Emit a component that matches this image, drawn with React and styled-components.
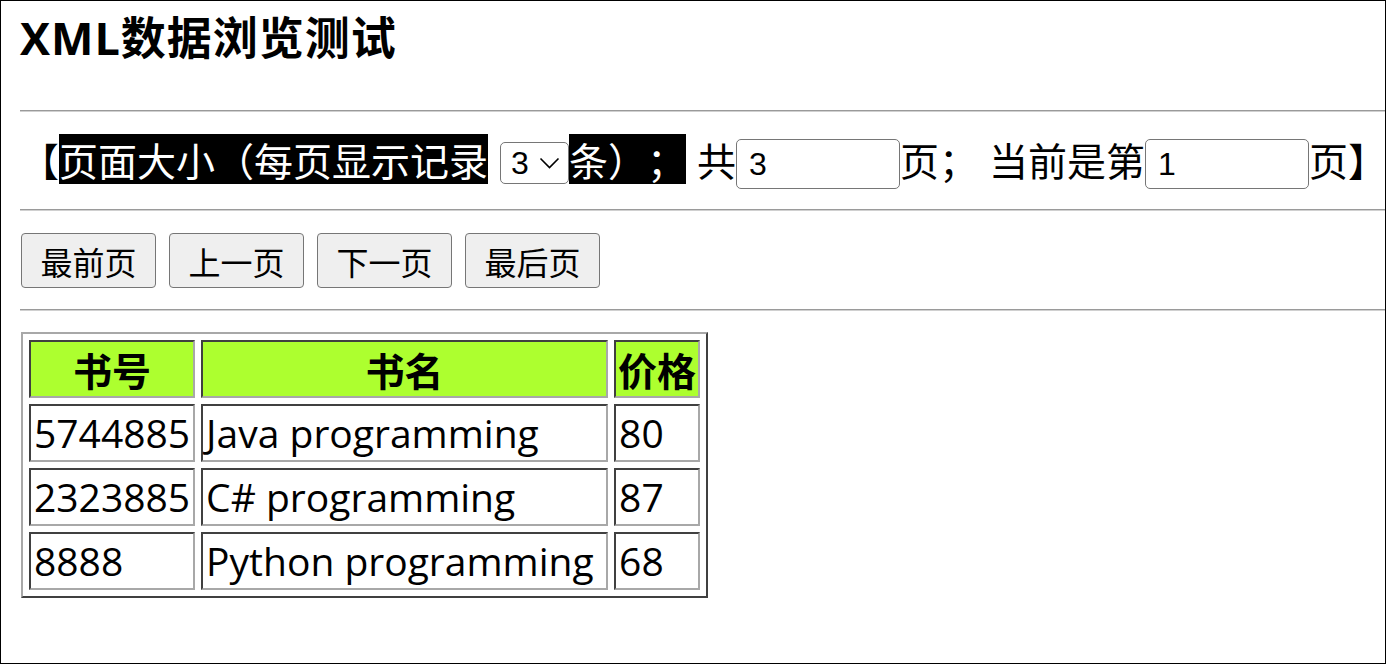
import React from "react";
import styled, { createGlobalStyle } from "styled-components";

const GlobalStyle = createGlobalStyle`
  html, body {
    margin: 0;
    padding: 0;
    background: #fff;
  }
  body {
    font-family: "Open Sans", "Noto Sans CJK SC", sans-serif;
    color: #000;
    text-spacing-trim: space-all;
  }
`;

const Frame = styled.div`
  box-sizing: border-box;
  width: 1386px;
  height: 664px;
  border: 1px solid #000;
  padding-left: 19px;
  overflow: hidden;
`;

const Header = styled.div`
  height: 109px;
  padding-top: 9px;
  box-sizing: border-box;
`;

const Title = styled.h3`
  margin: 0;
  font-size: 45px;
  line-height: 56px;
  font-weight: 700;
  font-family: "Open Sans", "Noto Sans CJK SC", sans-serif;
  letter-spacing: 1px;
`;

const Rule = styled.hr`
  margin: 0;
  height: 0;
  border: none;
  border-top: 1px solid #9a9a9a;
  border-bottom: 1px solid #d0d0d0;
`;

const PagerRow = styled.div`
  display: flex;
  align-items: flex-start;
  height: 97px;
  padding-top: 22px;
  box-sizing: border-box;
  white-space: nowrap;
  font-family: "Noto Sans CJK SC", sans-serif;
  font-size: 39px;
  text-spacing-trim: space-all;
`;

const Text = styled.span`
  display: inline-block;
  height: 50px;
  line-height: 50px;
  margin-left: ${(p) => p.$gap || 0}px;
`;

const Highlight = styled(Text)`
  background: #000;
  color: #fff;
`;

const SelectWrap = styled.span`
  position: relative;
  display: flex;
  margin: 8px 0 0 12px;
  width: 69px;
  height: 42px;
`;

const Select = styled.select`
  appearance: none;
  box-sizing: border-box;
  width: 69px;
  height: 42px;
  margin: 0;
  border: 1px solid #767676;
  border-radius: 5px;
  background: #fff;
  font-family: "Liberation Sans", Arial, sans-serif;
  font-size: 32px;
  line-height: 40px;
  padding: 0 0 0 10px;
  color: #000;
`;

const Chevron = styled.svg`
  position: absolute;
  right: 9px;
  top: 15px;
  width: 21px;
  height: 12px;
  pointer-events: none;
`;

const NumberInput = styled.input`
  box-sizing: border-box;
  width: 164px;
  height: 50px;
  margin-top: 5px;
  border: 1px solid #767676;
  border-radius: 5px;
  padding: 0 12px;
  font-family: "Liberation Sans", Arial, sans-serif;
  font-size: 32px;
  color: #000;
  background: #fff;
`;

const ButtonRow = styled.div`
  display: flex;
  gap: 13px;
  padding: 22px 0 21px 1px;
`;

const Button = styled.button`
  box-sizing: border-box;
  width: 135px;
  height: 55px;
  border: 1px solid #767676;
  border-radius: 4px;
  background: #efefef;
  font-family: "Noto Sans CJK SC", sans-serif;
  font-size: 32px;
  line-height: 1;
  color: #000;
  padding: 0;
`;

const Table = styled.table`
  margin: 21px 0 0 1px;
  border-collapse: separate;
  border-spacing: 6px;
  border: 2px solid;
  border-color: #a8a8a8 #404040 #404040 #a8a8a8;
  font-size: 39px;
`;

const HeadCell = styled.th`
  box-sizing: border-box;
  width: ${(p) => p.$w}px;
  height: 58px;
  background: #adff2f;
  border: 2px solid;
  border-color: #404040 #a8a8a8 #a8a8a8 #404040;
  padding: 0 2px;
  font-weight: 700;
  line-height: 50px;
  text-align: center;
  white-space: nowrap;
  font-family: "Noto Sans CJK SC", sans-serif;
`;

const Cell = styled.td`
  box-sizing: border-box;
  height: 58px;
  border: 2px solid;
  border-color: #404040 #a8a8a8 #a8a8a8 #404040;
  padding: 0 3px;
  line-height: 50px;
  white-space: nowrap;
`;

const books = [
  { id: "5744885", name: "Java programming", price: "80" },
  { id: "2323885", name: "C# programming", price: "87" },
  { id: "8888", name: "Python programming", price: "68" },
];

export default function App() {
  return (
    <>
      <GlobalStyle />
      <Frame>
        <Header>
          <Title>XML数据浏览测试</Title>
        </Header>
        <Rule />
        <PagerRow>
          <Text>【</Text>
          <Highlight>页面大小（每页显示记录</Highlight>
          <SelectWrap>
            <Select defaultValue="3">
              <option value="3">3</option>
              <option value="5">5</option>
              <option value="10">10</option>
            </Select>
            <Chevron viewBox="0 0 21 12">
              <polyline points="1.5,1.5 10.5,10.5 19.5,1.5" fill="none" stroke="#000" strokeWidth="1.6" />
            </Chevron>
          </SelectWrap>
          <Highlight>条）；</Highlight>
          <Text $gap={11}>共</Text>
          <NumberInput defaultValue="3" />
          <Text>页；</Text>
          <Text $gap={11}>当前是第</Text>
          <NumberInput defaultValue="1" />
          <Text>页】</Text>
        </PagerRow>
        <Rule />
        <ButtonRow>
          <Button>最前页</Button>
          <Button>上一页</Button>
          <Button>下一页</Button>
          <Button>最后页</Button>
        </ButtonRow>
        <Rule />
        <Table>
          <thead>
            <tr>
              <HeadCell $w={166}>书号</HeadCell>
              <HeadCell $w={407}>书名</HeadCell>
              <HeadCell $w={85}>价格</HeadCell>
            </tr>
          </thead>
          <tbody>
            {books.map((b) => (
              <tr key={b.id}>
                <Cell>{b.id}</Cell>
                <Cell>{b.name}</Cell>
                <Cell>{b.price}</Cell>
              </tr>
            ))}
          </tbody>
        </Table>
      </Frame>
    </>
  );
}
